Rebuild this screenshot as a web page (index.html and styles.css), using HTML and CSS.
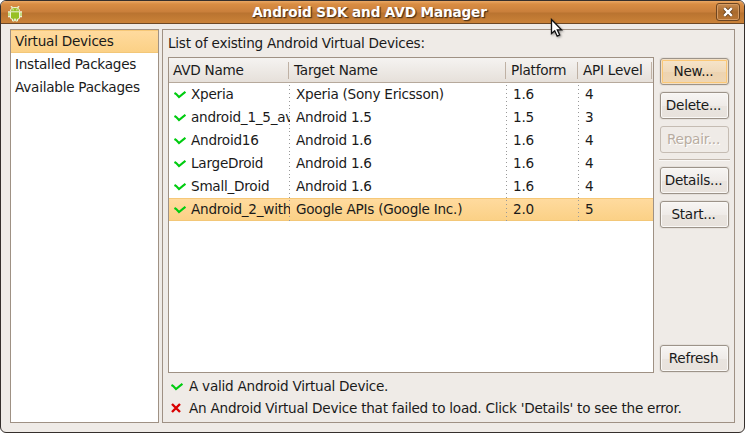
FILE: index.html
```
<!DOCTYPE html>
<html lang="en">
<head>
<meta charset="utf-8">
<title>Android SDK and AVD Manager</title>
<link rel="stylesheet" href="styles.css">
</head>
<body>
<svg class="defs" width="0" height="0" aria-hidden="true">
  <symbol id="check" viewBox="0 0 12 8">
    <path d="M0.5 2L2.2 3L5 6L11.4 0.8" fill="none" stroke="#00cc10" stroke-width="2.1"/>
  </symbol>
</svg>
<div class="window">
  <header class="titlebar">
    <svg class="droid" width="14" height="16" viewBox="0 0 14 16">
      <path d="M3 0L5 2.5M11 0L9 2.5" stroke="#e8efca" stroke-width="1.4"/>
      <path d="M2.5 5.5Q2.5 1.5 7 1.5T11.5 5.5V12Q11.5 13 10 13H9.5V15H7.7V13H6.3V15H4.5V13H4Q2.5 13 2.5 12Z" fill="#97c024" stroke="#f0f3dc"/>
      <path d="M1 6V10.5M13 6V10.5" stroke="#f0f3dc" stroke-width="2" stroke-linecap="round"/>
      <path d="M1 6.5V10M13 6.5V10" stroke="#97c024"/>
      <path d="M3 5.8H11" stroke="#f0f3dc"/>
      <path d="M4.6 3.8H5.6M8.4 3.8H9.4" stroke="#fff"/>
    </svg>
    <h1 class="title">Android SDK and AVD Manager</h1>
    <button class="close" aria-label="Close">
      <svg width="10" height="10" viewBox="0 0 10 10">
        <path d="M1.2 1.2L8.8 8.8M8.8 1.2L1.2 8.8" stroke="#5e3a19" stroke-width="4"/>
        <path d="M1.2 1.2L8.8 8.8M8.8 1.2L1.2 8.8" stroke="#fff" stroke-width="2.4"/>
      </svg>
    </button>
  </header>
  <main class="content">
    <nav class="sidebar">
      <div class="nav-item active">Virtual Devices</div>
      <div class="nav-item">Installed Packages</div>
      <div class="nav-item">Available Packages</div>
    </nav>
    <section class="panel">
      <div class="caption">List of existing Android Virtual Devices:</div>
      <div class="body">
        <div class="table">
          <div class="row head"><span>AVD Name</span><span>Target Name</span><span>Platform</span><span>API Level</span></div>
          <div class="row"><span><svg class="check"><use href="#check"/></svg>Xperia</span><span>Xperia (Sony Ericsson)</span><span>1.6</span><span>4</span></div>
          <div class="row"><span><svg class="check"><use href="#check"/></svg>android_1_5_av</span><span>Android 1.5</span><span>1.5</span><span>3</span></div>
          <div class="row"><span><svg class="check"><use href="#check"/></svg>Android16</span><span>Android 1.6</span><span>1.6</span><span>4</span></div>
          <div class="row"><span><svg class="check"><use href="#check"/></svg>LargeDroid</span><span>Android 1.6</span><span>1.6</span><span>4</span></div>
          <div class="row"><span><svg class="check"><use href="#check"/></svg>Small_Droid</span><span>Android 1.6</span><span>1.6</span><span>4</span></div>
          <div class="row selected"><span><svg class="check"><use href="#check"/></svg>Android_2_with</span><span>Google APIs (Google Inc.)</span><span>2.0</span><span>5</span></div>
        </div>
        <div class="actions">
          <button class="btn hover">New...</button>
          <button class="btn">Delete...</button>
          <button class="btn" disabled>Repair...</button>
          <div class="rule"></div>
          <button class="btn">Details...</button>
          <button class="btn">Start...</button>
          <button class="btn last">Refresh</button>
        </div>
      </div>
      <div class="legend">
        <div class="legend-item"><svg class="check"><use href="#check"/></svg>A valid Android Virtual Device.</div>
        <div class="legend-item"><svg class="cross" viewBox="0 0 10 10"><path d="M1 1L9 9M9 1L1 9" stroke="#d90000" stroke-width="2.4"/></svg>An Android Virtual Device that failed to load. Click 'Details' to see the error.</div>
      </div>
    </section>
  </main>
  <svg class="pointer" width="14" height="21" viewBox="0 0 14 21">
    <path d="M1.5 1.5V15.5L4.7 12.7L7.2 18.2L9.7 17L7.3 11.8H11.5Z" fill="#fff" stroke="#111" stroke-width="1.3"/>
  </svg>
</div>
</body>
</html>
```
FILE: styles.css
```
* { box-sizing: border-box; }
body {
  margin: 0;
  background: #fff;
  font: 13.6px/23px "DejaVu Sans", sans-serif;
  letter-spacing: -0.25px;
  color: #1a1a1a;
  white-space: nowrap;
}
.defs { position: absolute; }
.window {
  position: relative;
  width: 745px;
  height: 433px;
  display: flex;
  flex-direction: column;
  overflow: hidden;
  background: #efebe7;
  border: 1px solid #352f2c;
  border-radius: 6px;
}
.titlebar {
  flex: none;
  height: 23px;
  display: flex;
  align-items: center;
  padding: 0 4px 0 7px;
  background: linear-gradient(#eaa865 0, #d98d43 3px, #c97f3b 11px, #b97330 12px, #c98137 21px);
  border-bottom: 1px solid #6d4825;
}
.droid { flex: none; margin-top: 3px; }
.title {
  flex: 1;
  margin: 0 0 0 1px;
  text-align: center;
  font-size: 13.6px;
  letter-spacing: -0.13px;
  line-height: 22px;
  color: #fff;
  text-shadow: 1px 1px 1px #553719, 1px 1px 1px #553719;
}
.close {
  width: 24px;
  height: 18px;
  padding: 0;
  display: flex;
  align-items: center;
  justify-content: center;
  background: linear-gradient(#c88b50, #a96a2d 50%, #b87534);
  border: 1px solid #6d4521;
  border-radius: 3px;
  box-shadow: inset 0 0 0 1px #d59b63;
}
.content {
  flex: 1;
  display: flex;
  gap: 3px;
  padding: 5px 9px 9px;
}
.sidebar {
  width: 149px;
  background: #fff;
  border: 1px solid #9f9184;
}
.nav-item { height: 23px; padding-left: 4px; }
.active, .selected {
  background: linear-gradient(#ffdb9f, #fbd085);
  box-shadow: inset 0 1px #f6c878, inset 0 -1px #f3c778;
}
.panel {
  flex: 1;
  display: flex;
  flex-direction: column;
  padding-left: 5px;
  border: 1px solid #9f9184;
}
.caption { height: 27px; line-height: 27px; }
.body { display: flex; gap: 5px; }
.table {
  width: 486px;
  height: 316px;
  background: #fff;
  border: 1px solid #9f9184;
}
.row {
  display: grid;
  grid-template-columns: 121px 217px 72px 74px;
  height: 23px;
}
.row span {
  min-width: 0;
  overflow: hidden;
  padding-left: 6px;
  background: repeating-linear-gradient(#999 0 1px, transparent 1px 4px) right 2px / 1px 100% no-repeat;
}
.row span:first-child { display: flex; align-items: center; padding-left: 5px; }
.row span:last-child { background: none; }
.row .check { margin-right: 5px; }
.head {
  grid-template-columns: 120px 217px 72px 74px;
  height: 25px;
  line-height: 25px;
  background: linear-gradient(#f5f3f1, #e6e0da);
  border-bottom: 1px solid #b6a99c;
}
.head span, .head span:last-child {
  padding-left: 5px;
  background: linear-gradient(#bfb1a4, #bfb1a4) right 4px / 1px 17px no-repeat;
}
.head span:first-child { padding-left: 4px; }
.check { flex: none; width: 12px; height: 8px; margin-top: 1px; }
.actions {
  display: flex;
  flex-direction: column;
  align-items: center;
  gap: 7px;
  width: 71px;
}
.btn {
  flex: none;
  width: 69px;
  height: 27px;
  padding: 0 2px 0 0;
  font: inherit;
  letter-spacing: inherit;
  line-height: 25px;
  color: #1a1a1a;
  background: linear-gradient(#f7f5f3, #efebe8 50%, #e9e4df 51%, #e8e2dc);
  border: 1px solid #9c9389;
  border-radius: 3px;
  box-shadow: inset 0 0 0 1px #faf8f6, 0 0 0 1px #e5e0db;
}
.btn:first-child { margin-top: 1px; }
.hover {
  background: linear-gradient(#f6e5cc, #f0dabb 50%, #edd3b0 51%, #efd7b5);
  box-shadow: inset 0 0 0 1px #f2dfc5, inset 0 0 0 2px #fbc876, 0 0 0 1px #e5e0db;
}
.btn:disabled {
  color: #b8aca0;
  background: #efebe7;
  border-color: #c5bcb3;
  box-shadow: none;
  text-shadow: 1px 1px #fff;
}
.rule {
  width: 100%;
  height: 2px;
  margin: -1px 0 -1px;
  background: #c1b7ad;
  border-bottom: 1px solid #faf8f6;
}
.last { margin-top: auto; margin-bottom: 1px; }
.legend { padding: 2px 0 0 3px; }
.legend-item { display: flex; align-items: center; height: 22px; }
.legend .check { margin-right: 6px; }
.cross { width: 10px; height: 10px; margin-right: 8px; }
.pointer { position: absolute; left: 549px; top: 17px; filter: drop-shadow(1px 1px 1px #0006); }
```
